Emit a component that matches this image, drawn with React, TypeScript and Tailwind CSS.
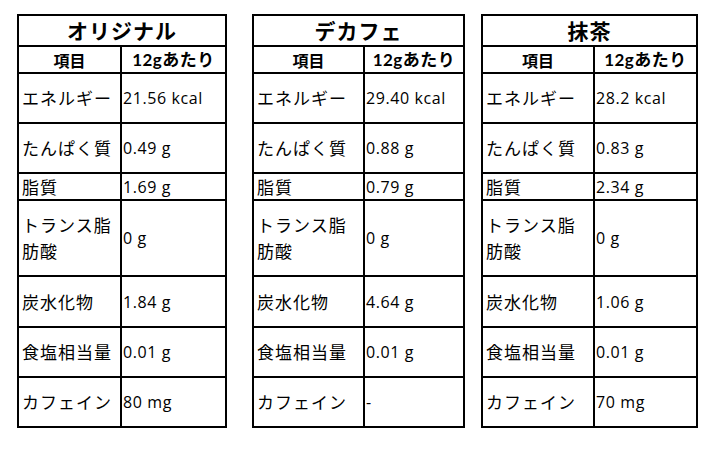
import React from 'react';

type Row = { label: React.ReactNode; value: string; h: string };

type Table = {
  title: string;
  width: string;
  col: string;
  values: string[];
};

const labels: { label: React.ReactNode; h: string }[] = [
  { label: 'エネルギー', h: 'h-[50px]' },
  { label: 'たんぱく質', h: 'h-[50px]' },
  { label: '脂質', h: 'h-[27px]' },
  { label: (<>トランス脂<br />肪酸</>), h: 'h-[76px]' },
  { label: '炭水化物', h: 'h-[51px]' },
  { label: '食塩相当量', h: 'h-[50px]' },
  { label: 'カフェイン', h: 'h-[50px]' },
];

const tables: Table[] = [
  {
    title: 'オリジナル',
    width: 'w-[210px]',
    col: 'w-[101px]',
    values: ['21.56 kcal', '0.49 g', '1.69 g', '0 g', '1.84 g', '0.01 g', '80 mg'],
  },
  {
    title: 'デカフェ',
    width: 'w-[213px] ml-[25px]',
    col: 'w-[109px]',
    values: ['29.40 kcal', '0.88 g', '0.79 g', '0 g', '4.64 g', '0.01 g', '-'],
  },
  {
    title: '抹茶',
    width: 'w-[217px] ml-[16px]',
    col: 'w-[110px]',
    values: ['28.2 kcal', '0.83 g', '2.34 g', '0 g', '1.06 g', '0.01 g', '70 mg'],
  },
];

const jp = "font-['Noto_Sans_CJK_JP',sans-serif]";
const num = "font-['Open_Sans','Noto_Sans_CJK_JP',sans-serif]";
const head = "font-['Lato','Noto_Sans_CJK_JP',sans-serif]";

const NutritionTable: React.FC<{ t: Table }> = ({ t }) => {
  const rows: Row[] = labels.map((l, i) => ({ ...l, value: t.values[i] }));
  return (
    <div className={`${t.width} shrink-0 border-2 border-black bg-white text-black`}>
      {/* title */}
      <div className={`h-[29px] flex items-center justify-center text-[21px] font-bold tracking-[1px] ${jp}`}>
        {t.title}
      </div>

      {/* header */}
      <div className="h-[27px] flex border-t-2 border-black">
        <div className={`${t.col} shrink-0 flex items-center justify-center text-[16px] font-bold ${jp}`}>
          項目
        </div>
        <div className={`flex-1 flex items-center justify-center border-l-2 border-black text-[17px] font-bold tracking-[0.5px] ${head}`}>
          12gあたり
        </div>
      </div>

      {rows.map((r, i) => (
        <div key={i} className={`${r.h} flex border-t-2 border-black`}>
          <div className={`${t.col} shrink-0 flex items-center pl-[3px] text-[17px] leading-[26px] tracking-[1px] ${jp}`}>
            <span>{r.label}</span>
          </div>
          <div className={`flex-1 flex items-center border-l-2 border-black pl-[1px] text-[16px] tracking-[0.6px] ${num}`}>
            {r.value}
          </div>
        </div>
      ))}
    </div>
  );
};

export default function App() {
  return (
    <div className="w-[719px] h-[452px] bg-white pt-[14px] pl-[17px] flex items-start">
      {tables.map((t) => (
        <NutritionTable key={t.title} t={t} />
      ))}
    </div>
  );
}
